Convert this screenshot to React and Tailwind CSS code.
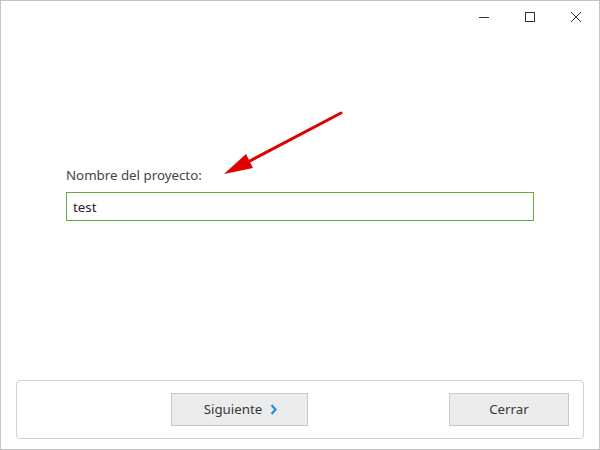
import React from "react";

const font = { fontFamily: '"Noto Sans", "Open Sans", sans-serif' };

const TitleBar = () => (
  <div className="flex h-[32px] justify-end">
    <button className="flex w-[46px] items-center justify-center">
      <svg width="12" height="12" viewBox="0 0 12 12">
        <path d="M1 6.5h10" stroke="#333" strokeWidth="1" />
      </svg>
    </button>
    <button className="flex w-[46px] items-center justify-center">
      <svg width="12" height="12" viewBox="0 0 12 12">
        <rect x="1.5" y="1.5" width="9" height="9" fill="none" stroke="#333" strokeWidth="1" />
      </svg>
    </button>
    <button className="flex w-[46px] items-center justify-center">
      <svg width="12" height="12" viewBox="0 0 12 12">
        <path d="M1 1l10 10M11 1L1 11" stroke="#333" strokeWidth="1" />
      </svg>
    </button>
  </div>
);

export default function App() {
  return (
    <div className="relative flex h-[450px] w-[600px] flex-col border border-[#c4c4c4] bg-white" style={font}>
      <TitleBar />

      {/* form */}
      <div className="flex flex-1 flex-col pl-[65px] pr-[65px] pt-[133px]">
        <label className="text-[13.3px] leading-[18px] text-[#444]">Nombre del proyecto:</label>
        <input
          defaultValue="test"
          className="mt-[8px] h-[29px] w-[468px] border border-[#6aa83c] px-[6px] text-[13.3px] text-[#222] outline-none"
          style={font}
        />
      </div>

      {/* footer panel */}
      <div className="mx-[15px] mb-[10px] flex h-[59px] items-start rounded-[4px] border border-[#d2d2d2] pt-[12px] pl-[154px] pr-[14px]">
        <button className="flex h-[33px] w-[137px] items-center justify-center gap-[8px] border border-[#c8c8c8] bg-[#ececec] pl-[2px] text-[13.3px] text-[#3a3a3a]">
          Siguiente
          <svg width="7" height="11" viewBox="0 0 7 11">
            <path d="M1.5 1l4 4.5-4 4.5" fill="none" stroke="#1b8fe3" strokeWidth="2.2" />
          </svg>
        </button>
        <div className="flex-1" />
        <button className="flex h-[33px] w-[120px] items-center justify-center border border-[#c8c8c8] bg-[#ececec] text-[13.3px] text-[#3a3a3a]">
          Cerrar
        </button>
      </div>

      {/* annotation arrow */}
      <svg className="pointer-events-none absolute left-0 top-0" width="600" height="450">
        <line x1="340" y1="112" x2="245" y2="162" stroke="#e00000" strokeWidth="3" strokeLinecap="round" />
        <polygon points="223,173 245,153 252,167" fill="#e00000" />
      </svg>
    </div>
  );
}
